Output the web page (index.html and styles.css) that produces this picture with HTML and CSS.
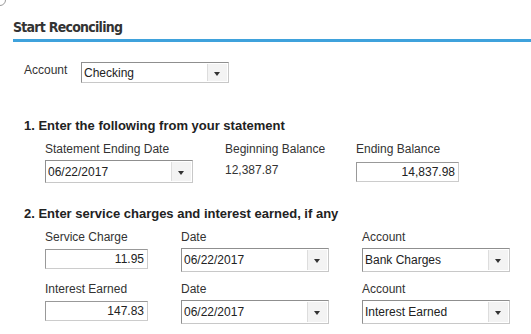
FILE: index.html
```html
<!DOCTYPE html>
<html lang="en">
<head>
  <meta charset="UTF-8" />
  <title>Start Reconciling</title>
  <link rel="stylesheet" href="styles.css">
</head>
<body>
  <div class="corner"></div>
  <div class="dialog">
    <h2>Start Reconciling</h2>

    <div class="account-row">
      <label>Account</label>
      <div class="select wide"><span>Checking</span><i class="arrow"></i></div>
    </div>

    <h3>1. Enter the following from your statement</h3>
    <div class="fields one">
      <label>Statement Ending Date</label>
      <label>Beginning Balance</label>
      <label>Ending Balance</label>

      <div class="select wide mid"><span>06/22/2017</span><i class="arrow"></i></div>
      <div class="value">12,387.87</div>
      <div class="amount">14,837.98</div>
    </div>

    <h3 class="second">2. Enter service charges and interest earned, if any</h3>
    <div class="fields two">
      <label>Service Charge</label>
      <label>Date</label>
      <label>Account</label>

      <div class="amount">11.95</div>
      <div class="select wide tall"><span>06/22/2017</span><i class="arrow"></i></div>
      <div class="select wide tall"><span>Bank Charges</span><i class="arrow"></i></div>

      <label class="gap">Interest Earned</label>
      <label class="gap">Date</label>
      <label class="gap">Account</label>

      <div class="amount">147.83</div>
      <div class="select wide tall"><span>06/22/2017</span><i class="arrow"></i></div>
      <div class="select wide tall"><span>Interest Earned</span><i class="arrow"></i></div>
    </div>
  </div>
</body>
</html>
```

FILE: styles.css
```css
body {
  margin: 0;
  background: #fff;
  font-family: "Liberation Sans", Arial, sans-serif;
  font-size: 12px;
  color: #333;
}

.corner {
  position: absolute;
  top: -6px;
  left: -6px;
  width: 10px;
  height: 10px;
  border: 1px solid #999;
  border-radius: 6px;
}

.dialog {
  padding: 19px 0 0 13px;
}

h2 {
  margin: 0;
  padding-bottom: 4px;
  font-family: "DejaVu Sans Condensed", "DejaVu Sans", sans-serif;
  font-size: 14px;
  line-height: 16px;
  letter-spacing: -0.75px;
  font-weight: bold;
  color: #333;
  border-bottom: 3px solid #3fa2dc;
}

.account-row {
  display: flex;
  align-items: flex-start;
  margin: 20px 0 0 11px;
}

.account-row label {
  width: 57px;
  padding-top: 1px;
}

h3 {
  margin: 35px 0 0 11px;
  font-size: 13px;
  font-weight: bold;
  color: #222;
}

h3.second {
  margin-top: 23px;
}

.fields {
  display: grid;
  margin: 9px 0 0 32px;
  row-gap: 4px;
  align-items: center;
}

.fields.one {
  grid-template-columns: 180px 131px auto;
}

.fields.two {
  grid-template-columns: 136px 181px auto;
}

.fields.two .amount {
  align-self: start;
  margin-top: 1px;
}

.fields label.gap {
  margin-top: 6px;
}

.value {
  align-self: start;
  padding-top: 3px;
}

.select {
  display: flex;
  height: 19px;
  border: 1px solid #c8c8c8;
  border-top-color: #8f8f8f;
  border-left-color: #8f8f8f;
  background: #fff;
  color: #222;
}

.select.wide {
  width: 146px;
}

.select.mid {
  height: 21px;
}

.select.tall {
  height: 22px;
}

.select span {
  flex: 1;
  padding: 2px 0 0 2px;
  line-height: 16px;
}

.select.mid span,
.select.tall span {
  padding-top: 3px;
}

.arrow {
  position: relative;
  width: 19px;
  margin: 1px 1px 1px 0;
  background: #f3f3f3;
  border-left: 1px solid #ddd;
}

.arrow::after {
  content: "";
  position: absolute;
  left: 6px;
  top: 50%;
  margin-top: -1px;
  border-left: 3px solid transparent;
  border-right: 3px solid transparent;
  border-top: 4px solid #333;
}

.amount {
  width: 98px;
  height: 17px;
  padding: 1px 3px 0 0;
  text-align: right;
  line-height: 17px;
  border: 1px solid #ccc;
  border-top-color: #999;
  border-left-color: #999;
  color: #222;
}
```
